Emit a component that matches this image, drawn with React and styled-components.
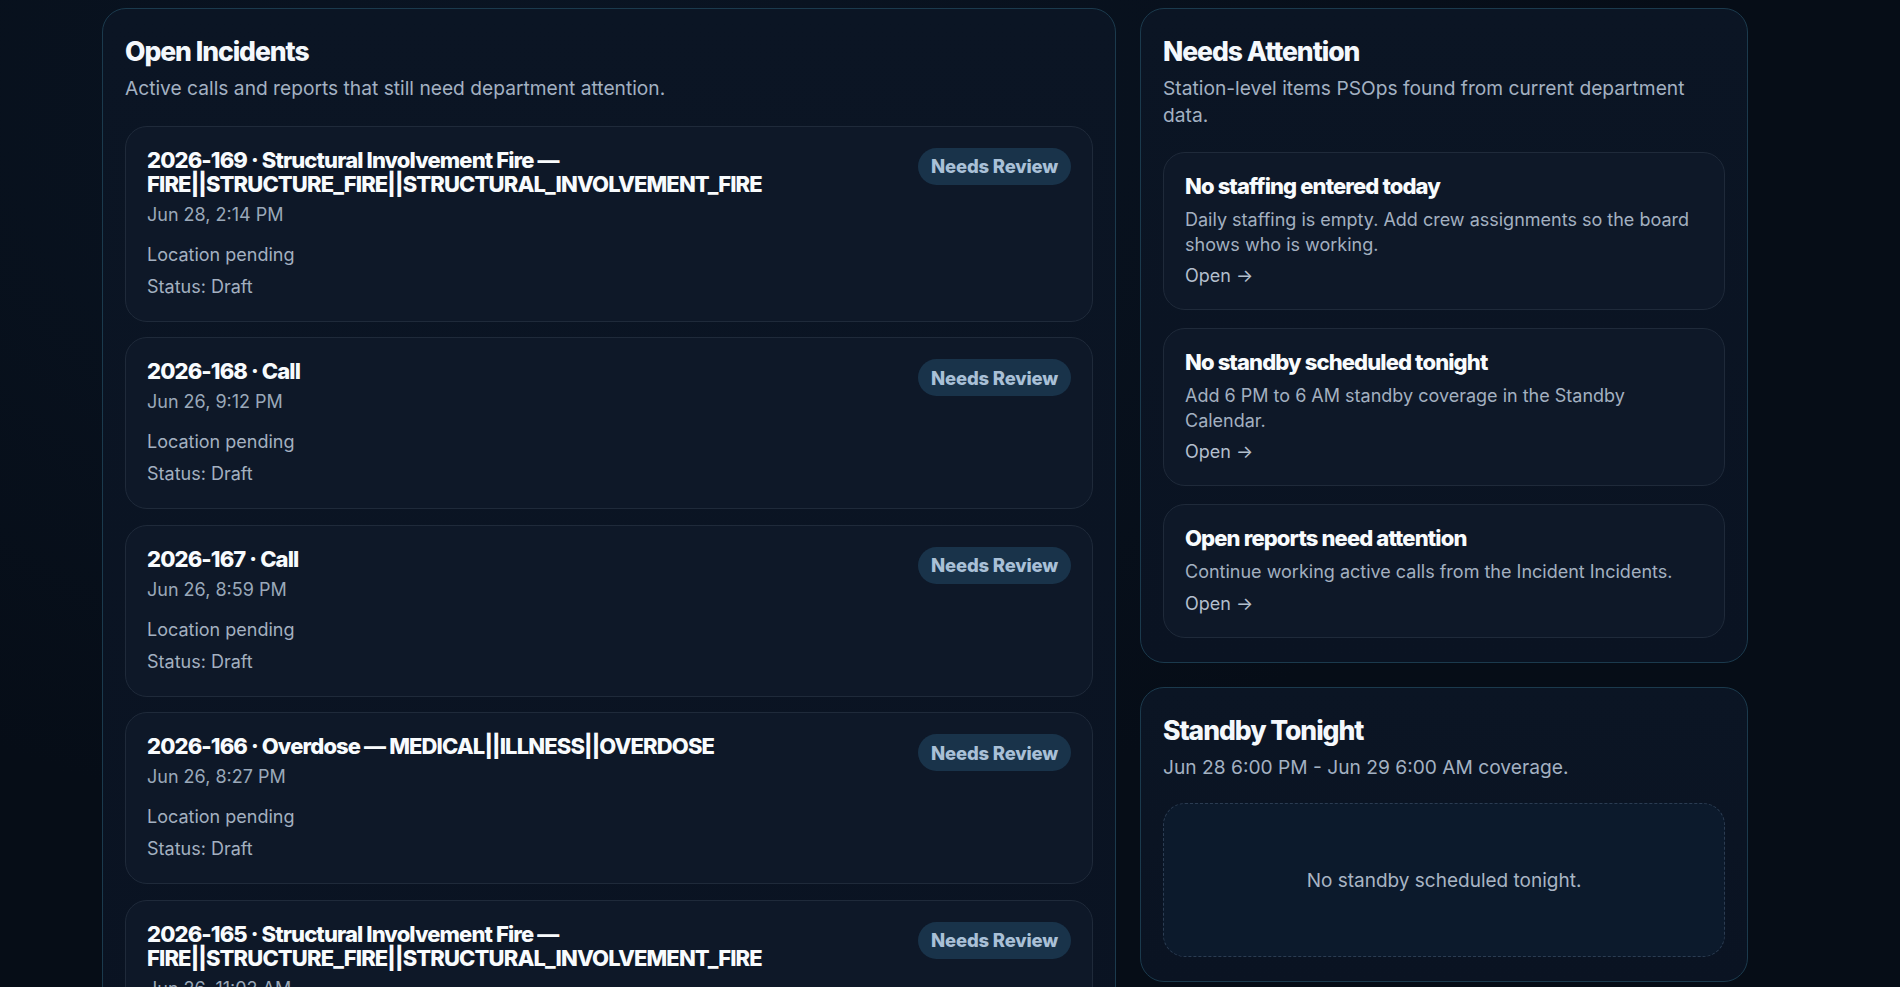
import React from 'react';
import styled, {createGlobalStyle} from 'styled-components';

const incidents = [
  {id: '2026-169', title: 'Structural Involvement Fire — FIRE||STRUCTURE_FIRE||STRUCTURAL_INVOLVEMENT_FIRE', time: 'Jun 28, 2:14 PM'},
  {id: '2026-168', title: 'Call', time: 'Jun 26, 9:12 PM'},
  {id: '2026-167', title: 'Call', time: 'Jun 26, 8:59 PM'},
  {id: '2026-166', title: 'Overdose — MEDICAL||ILLNESS||OVERDOSE', time: 'Jun 26, 8:27 PM'},
  {id: '2026-165', title: 'Structural Involvement Fire — FIRE||STRUCTURE_FIRE||STRUCTURAL_INVOLVEMENT_FIRE', time: 'Jun 26, 11:02 AM'},
];

const attention = [
  {title: 'No staffing entered today', body: 'Daily staffing is empty. Add crew assignments so the board shows who is working.'},
  {title: 'No standby scheduled tonight', body: 'Add 6 PM to 6 AM standby coverage in the Standby Calendar.'},
  {title: 'Open reports need attention', body: 'Continue working active calls from the Incident Incidents.'},
];

export default function App() {
  return (
    <>
      <GlobalStyle/>
      <Page>
        <Panel>
          <PanelTitle>Open Incidents</PanelTitle>
          <PanelSub>Active calls and reports that still need department attention.</PanelSub>
          <List $gap={15.5}>
            {incidents.map(inc => (
              <IncidentCard key={inc.id}>
                <CardMain>
                  <CardTitle>{inc.id} · {inc.title}</CardTitle>
                  <CardTime>{inc.time}</CardTime>
                  <Details>
                    <span>Location pending</span>
                    <span>Status: Draft</span>
                  </Details>
                </CardMain>
                <Badge>Needs Review</Badge>
              </IncidentCard>
            ))}
          </List>
        </Panel>

        <Side>
          <Panel>
            <PanelTitle>Needs Attention</PanelTitle>
            <PanelSub>Station-level items PSOps found from current department data.</PanelSub>
            <List $gap={18}>
              {attention.map(a => (
                <AlertCard key={a.title}>
                  <CardTitle>{a.title}</CardTitle>
                  <AlertBody>{a.body}</AlertBody>
                  <OpenLink href="#">Open →</OpenLink>
                </AlertCard>
              ))}
            </List>
          </Panel>

          <Panel>
            <PanelTitle>Standby Tonight</PanelTitle>
            <PanelSub>Jun 28 6:00 PM - Jun 29 6:00 AM coverage.</PanelSub>
            <Empty>No standby scheduled tonight.</Empty>
          </Panel>
        </Side>
      </Page>
    </>
  )
}

const GlobalStyle = createGlobalStyle`
  html, body {
    margin: 0;
    height: 100%;
    overflow: hidden;
  }
  body {
    font-family: Inter, "Noto Sans", sans-serif;
    color: #e8eef6;
    background:
      radial-gradient(ellipse at 30% 10%, #0a1524 0%, transparent 60%),
      #060d17;
  }
`

const Page = styled.div`
  display: grid;
  grid-template-columns: 1014px 608px;
  gap: 24px;
  align-items: start;
  padding: 8px 0 0 102px;
`

const Side = styled.div`
  display: flex;
  flex-direction: column;
  gap: 24px;
`

const Panel = styled.section`
  background: linear-gradient(180deg, #0b1524 0%, #0a1322 100%);
  border: 1.5px solid #1b3a4d;
  border-radius: 24px;
  padding: 24px 22px 24px;
`

const PanelTitle = styled.h2`
  margin: 0;
  font-size: 26.5px;
  line-height: 36px;
  font-weight: 800;
  letter-spacing: -0.04em;
  color: #f4f8fc;
`

const PanelSub = styled.p`
  margin: 6px 0 0;
  font-size: 19.2px;
  line-height: 26.5px;
  color: #a3b1c2;
`

const List = styled.div`
  display: flex;
  flex-direction: column;
  gap: ${p => p.$gap}px;
  margin-top: 24px;
`

const IncidentCard = styled.article`
  display: flex;
  justify-content: space-between;
  align-items: flex-start;
  gap: 24px;
  background: #0e1828;
  border: 1.5px solid #1f2a3a;
  border-radius: 22px;
  padding: 21px 21px 22px;
`

const CardMain = styled.div`
  display: flex;
  flex-direction: column;
  max-width: 660px;
`

const CardTitle = styled.h3`
  margin: 0;
  font-size: 22px;
  line-height: 24px;
  font-weight: 800;
  letter-spacing: -0.04em;
  color: #f8fbfd;
`

const CardTime = styled.div`
  margin-top: 7px;
  font-size: 18px;
  line-height: 24px;
  color: #9aa8b9;
`

const Details = styled.div`
  display: flex;
  flex-direction: column;
  gap: 8px;
  margin-top: 16px;
  font-size: 18px;
  line-height: 24px;
  color: #a3b0c0;
`

const Badge = styled.span`
  flex-shrink: 0;
  display: inline-flex;
  align-items: center;
  height: 37px;
  padding: 0 13px;
  border-radius: 999px;
  background: #19334a;
  color: #a9c0d7;
  font-size: 18.5px;
  font-weight: 800;
  letter-spacing: -0.01em;
`

const AlertCard = styled.article`
  display: flex;
  flex-direction: column;
  background: #0e1828;
  border: 1.5px solid #1f2a3a;
  border-radius: 22px;
  padding: 21px 21px 21px;
`

const AlertBody = styled.p`
  margin: 10px 0 0;
  font-size: 18px;
  line-height: 24.5px;
  color: #a3b0c0;
`

const OpenLink = styled.a`
  margin-top: 7px;
  font-size: 18px;
  line-height: 24px;
  color: #b3bfcd;
  text-decoration: none;
`

const Empty = styled.div`
  display: flex;
  align-items: center;
  justify-content: center;
  height: 152px;
  margin-top: 23px;
  border: 1.5px dashed #2b3c52;
  border-radius: 22px;
  background: #0c1a2c;
  color: #a9b5c4;
  font-size: 19px;
`
